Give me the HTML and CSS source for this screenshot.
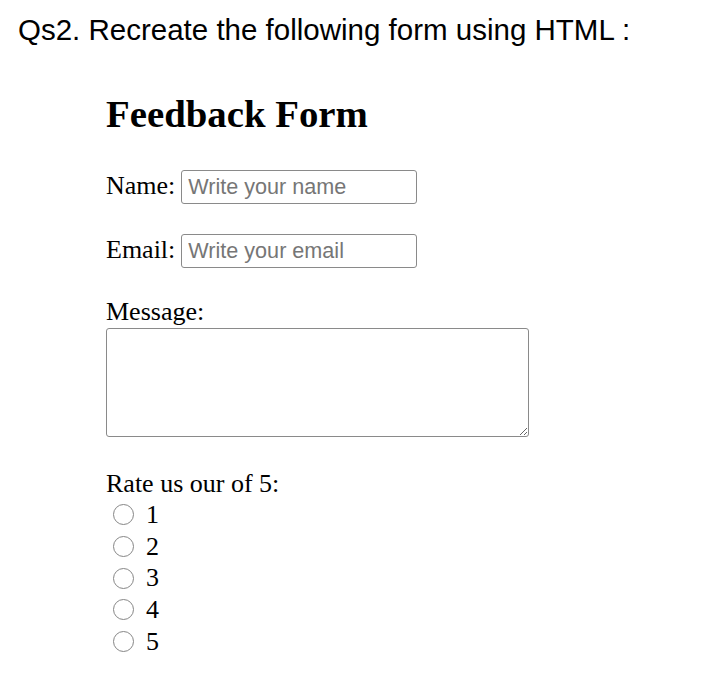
FILE: index.html
```html
<!DOCTYPE html>
<html lang="en">
<head>
<meta charset="utf-8">
<title>Feedback Form</title>
<link rel="stylesheet" href="styles.css">
</head>
<body>
<p class="question">Qs2. Recreate the following form using HTML :</p>
<form class="feedback">
  <h2 class="form-title">Feedback Form</h2>
  <div class="field">
    <label class="field-label" for="name">Name:</label>
    <input class="text-input" id="name" type="text" placeholder="Write your name">
  </div>
  <div class="field field-email">
    <label class="field-label" for="email">Email:</label>
    <input class="text-input" id="email" type="email" placeholder="Write your email">
  </div>
  <label class="block-label" for="message">Message:</label>
  <textarea class="message" id="message"></textarea>
  <p class="rate-label">Rate us our of 5:</p>
  <div class="radio-row"><input class="radio" type="radio" name="rating" id="r1"><label class="radio-label" for="r1">1</label></div>
  <div class="radio-row"><input class="radio" type="radio" name="rating" id="r2"><label class="radio-label" for="r2">2</label></div>
  <div class="radio-row"><input class="radio" type="radio" name="rating" id="r3"><label class="radio-label" for="r3">3</label></div>
  <div class="radio-row"><input class="radio" type="radio" name="rating" id="r4"><label class="radio-label" for="r4">4</label></div>
  <div class="radio-row"><input class="radio" type="radio" name="rating" id="r5"><label class="radio-label" for="r5">5</label></div>
</form>
</body>
</html>
```

FILE: styles.css
```css
html, body {
  background: #ffffff;
}

body {
  margin: 0;
  color: #000000;
  font-family: "Liberation Serif", "Times New Roman", serif;
  font-size: 26px;
}

.question {
  margin: 13px 0 0 18px;
  font-family: "Liberation Sans", Arial, sans-serif;
  font-size: 29.5px;
  line-height: 34px;
}

.feedback {
  margin: 0 0 0 106px;
  display: block;
}

.form-title {
  margin: 45px 0 0 0;
  font-size: 38.8px;
  font-weight: bold;
  line-height: 44px;
}

.field {
  display: flex;
  align-items: baseline;
  gap: 6px;
  margin-top: 34px;
}

.field-email {
  margin-top: 30px;
}

.field-label {
  line-height: 29px;
}

.text-input {
  box-sizing: border-box;
  width: 236px;
  height: 34px;
  margin: 0;
  padding: 0 6px;
  border: 1.5px solid #8a8a8a;
  border-radius: 3px;
  font-family: "Liberation Sans", Arial, sans-serif;
  font-size: 21.6px;
  color: #000;
  background: #fff;
  outline: none;
}

.text-input::placeholder {
  color: #767676;
}

.block-label {
  display: block;
  margin-top: 29px;
  line-height: 30px;
}

.message {
  display: block;
  box-sizing: border-box;
  width: 423px;
  height: 109px;
  margin: 1px 0 0 0;
  padding: 4px;
  border: 1.5px solid #8a8a8a;
  border-radius: 3px;
  font-family: "Liberation Mono", monospace;
  font-size: 21px;
  background: #fff;
}

.rate-label {
  margin: 32px 0 0 0;
  line-height: 30px;
}

.radio-row {
  display: flex;
  align-items: center;
  height: 31.7px;
}

.radio {
  appearance: none;
  -webkit-appearance: none;
  box-sizing: border-box;
  width: 21px;
  height: 21px;
  margin: 0 12px 0 7px;
  border: 1.6px solid #868686;
  border-radius: 50%;
  background: #fff;
  flex: none;
}

.radio-label {
  line-height: 30px;
}
```
